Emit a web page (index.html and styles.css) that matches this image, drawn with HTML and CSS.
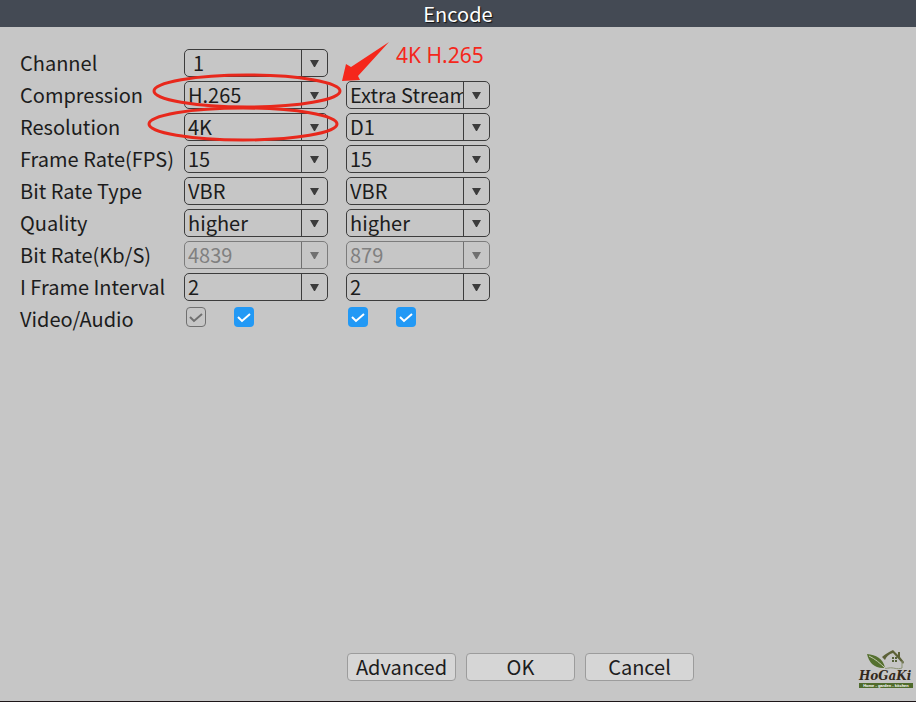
FILE: index.html
```html
<!DOCTYPE html>
<html lang="en">
<head>
    <meta charset="UTF-8">
    <meta name="viewport" content="width=device-width, initial-scale=1.0">
    <title>Encode</title>
    <link rel="stylesheet" href="styles.css">
</head>
<body>
    <header class="title-bar">
        <h1>Encode</h1>
    </header>

    <form class="encode-form">
        <div class="settings">
            <label for="channel">Channel</label>
            <select id="channel" class="channel"><option>1</option></select>

            <label for="compression">Compression</label>
            <select id="compression"><option>H.265</option></select>
            <select aria-label="Extra stream"><option>Extra Stream1</option></select>

            <label for="resolution">Resolution</label>
            <select id="resolution"><option>4K</option></select>
            <select aria-label="Extra stream resolution"><option>D1</option></select>

            <label for="frameRate">Frame Rate(FPS)</label>
            <select id="frameRate"><option>15</option></select>
            <select aria-label="Extra stream frame rate"><option>15</option></select>

            <label for="bitRateType">Bit Rate Type</label>
            <select id="bitRateType"><option>VBR</option></select>
            <select aria-label="Extra stream bit rate type"><option>VBR</option></select>

            <label for="quality">Quality</label>
            <select id="quality"><option>higher</option></select>
            <select aria-label="Extra stream quality"><option>higher</option></select>

            <label for="bitRate">Bit Rate(Kb/S)</label>
            <select id="bitRate" disabled><option>4839</option></select>
            <select aria-label="Extra stream bit rate" disabled><option>879</option></select>

            <label for="interval">I Frame Interval</label>
            <select id="interval"><option>2</option></select>
            <select aria-label="Extra stream I frame interval"><option>2</option></select>

            <label for="video">Video/Audio</label>
            <div class="checks">
                <input type="checkbox" id="video" checked disabled>
                <input type="checkbox" aria-label="Audio" checked>
            </div>
            <div class="checks">
                <input type="checkbox" aria-label="Extra stream video" checked>
                <input type="checkbox" aria-label="Extra stream audio" checked>
            </div>
        </div>

        <div class="actions">
            <button type="button">Advanced</button>
            <button type="submit">OK</button>
            <button type="button">Cancel</button>
            <svg class="logo" width="58" height="44" viewBox="0 0 58 44" role="img" aria-label="HoGaKi">
                <path d="M9 9c9 1 16 4 18 14C17 24 11 18 9 9z" fill="#55702f"/>
                <path d="M11 11c6 3 11 7 16 12" fill="none" stroke="#c3cbb0" stroke-width="1"/>
                <path d="M24 12C27 9 31 7 35 5l5 5V7h2v5l4 5-1 2-10-11c-4 1-7 4-8 7z" fill="#5c6138"/>
                <path d="M44 16v7c-5 2-9-1-13 0-2 0-3 1-4 0" fill="none" stroke="#8c9475" stroke-width="1"/>
                <path d="M34 12h2v2h-2zM37 12h2v2h-2zM34 15h2v2h-2zM37 15h2v2h-2z" fill="#55613a"/>
                <text class="logo-name" x="1" y="35">HoGaKi</text>
                <rect x="1" y="38" width="54" height="5" fill="#4f6b2c"/>
                <text class="logo-tag" x="28" y="42">Home - garden - kitchen</text>
            </svg>
        </div>
    </form>

    <!-- red marks over the main stream settings -->
    <svg class="marks" width="500" height="150" viewBox="0 0 500 150">
        <ellipse cx="247" cy="91" rx="93" ry="16"/>
        <ellipse cx="243" cy="124" rx="94" ry="16"/>
        <path d="M389 42L358 76l2 4-18 1 4-17 5 3z"/>
        <text x="396" y="63">4K H.265</text>
    </svg>
</body>
</html>
```
FILE: styles.css
```css
* {
    box-sizing: border-box;
}

body {
    margin: 0;
    min-height: 100vh;
    display: flex;
    flex-direction: column;
    position: relative;
    background: #c6c6c6;
    border-bottom: 1px solid #1c1618;
    color: #1c1c1c;
    font-family: "Noto Sans CJK SC", "Noto Sans", sans-serif;
    font-size: 20px;
}

.title-bar {
    height: 27px;
    background: #444a54;
    color: white;
    text-align: center;
    text-shadow: 1px 1px 1px #111;
}

.title-bar h1 {
    margin: 0;
    font-size: 20px;
    line-height: 27px;
    font-weight: 400;
}

.encode-form {
    flex: 1;
    display: flex;
    flex-direction: column;
    justify-content: space-between;
    padding: 22px 0 12px;
}

.settings {
    display: grid;
    grid-template-columns: 146px 144px 144px;
    grid-auto-rows: 28px;
    gap: 4px 18px;
    padding-left: 20px;
}

.settings label {
    grid-column: 1;
    line-height: 28px;
    white-space: nowrap;
}

select {
    appearance: none;
    width: 100%;
    height: 28px;
    padding: 0 26px 0 3px;
    border: 1px solid #3c3c3c;
    border-radius: 5px;
    background:
        url("data:image/svg+xml,%3Csvg xmlns='http://www.w3.org/2000/svg' width='26' height='26'%3E%3Cpath d='M0 0h1v26H0zM9 10h9l-4 7h-1z' fill='%233c3c3c'/%3E%3C/svg%3E") right center no-repeat;
    color: #1c1c1c;
    font: inherit;
    line-height: 26px;
}

select.channel {
    padding-left: 8px;
}

select:disabled {
    border-color: #7c7c7c;
    background-image: url("data:image/svg+xml,%3Csvg xmlns='http://www.w3.org/2000/svg' width='26' height='26'%3E%3Cpath d='M0 0h1v26H0zM9 10h9l-4 7h-1z' fill='%23707070'/%3E%3C/svg%3E");
    color: #808080;
    opacity: 1;
}

.checks {
    display: flex;
    gap: 28px;
    padding: 2px;
}

.checks input {
    appearance: none;
    width: 20px;
    height: 20px;
    margin: 0;
    border-radius: 4px;
    background: #2299f5 url("data:image/svg+xml,%3Csvg xmlns='http://www.w3.org/2000/svg' width='20' height='20'%3E%3Cpath d='M4 10l4 4 8-7' fill='none' stroke='white' stroke-width='2'/%3E%3C/svg%3E") center no-repeat;
}

.checks input:disabled {
    border: 1px solid #707070;
    background: url("data:image/svg+xml,%3Csvg xmlns='http://www.w3.org/2000/svg' width='20' height='20'%3E%3Cpath d='M4 10l4 4 8-7' fill='none' stroke='%23707070' stroke-width='2'/%3E%3C/svg%3E") center no-repeat;
}

.actions {
    display: flex;
    align-items: center;
    gap: 10px;
    padding-left: 347px;
}

.actions button {
    width: 109px;
    height: 28px;
    padding: 0;
    border: 1px solid #9c9c9c;
    border-radius: 4px;
    background: #d6d6d6;
    color: #1c1c1c;
    font: inherit;
    line-height: 26px;
}

.logo {
    margin-left: auto;
    flex-shrink: 0;
}

.logo-name {
    font: italic bold 12px "DejaVu Serif", serif;
    fill: #33291c;
}

.logo-tag {
    font: bold 4px "Liberation Sans", sans-serif;
    fill: white;
    text-anchor: middle;
}

.marks {
    position: absolute;
    top: 0;
    left: 0;
    pointer-events: none;
}

.marks ellipse {
    fill: none;
    stroke: #e8281c;
    stroke-width: 3;
}

.marks path,
.marks text {
    fill: #f5271b;
}

.marks text {
    font: 21px "Noto Sans", sans-serif;
}
```
